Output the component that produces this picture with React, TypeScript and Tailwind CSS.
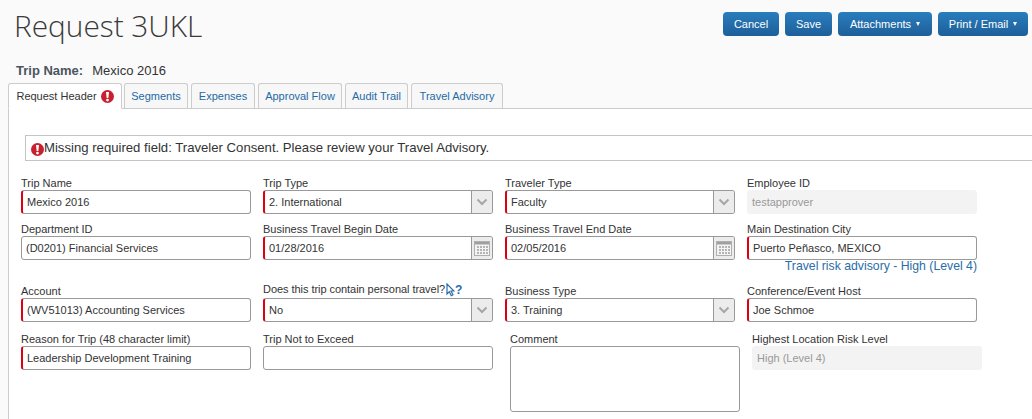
import React from "react";

const sans = "font-['Liberation_Sans',Arial,sans-serif]";

function ErrorIcon({ size = 14, className = "" }: { size?: number; className?: string }) {
  return (
    <svg width={size} height={size} viewBox="0 0 14 14" className={`shrink-0 ${className}`}>
      <circle cx="7" cy="7" r="7" fill="#c8202f" />
      <path d="M5.4 2.2h3.2L7.9 8.6H6.1z" fill="#fff" />
      <circle cx="7" cy="10.8" r="1.5" fill="#fff" />
    </svg>
  );
}

function Chevron() {
  return (
    <svg width="12" height="8" viewBox="0 0 12 8">
      <path d="M1.5 1.5 6 6l4.5-4.5" fill="none" stroke="#a6a6a6" strokeWidth="2" />
    </svg>
  );
}

function Calendar() {
  return (
    <svg width="16" height="15" viewBox="0 0 16 15">
      <rect x="0.5" y="0.5" width="15" height="14" fill="#f4f4f4" stroke="#b0b0b0" />
      <rect x="1" y="1" width="14" height="2.5" fill="#a0a0a0" />
      {[5, 8, 11].map((y) =>
        [3, 6, 9, 12].map((x) => <rect key={`${x}-${y}`} x={x} y={y} width="2" height="2" fill="#b4b4b4" />)
      )}
    </svg>
  );
}

function Label({ children, className = "" }: { children: React.ReactNode; className?: string }) {
  return <div className={`h-[14px] text-[11px] leading-[15px] text-[#333] whitespace-nowrap ${className}`}>{children}</div>;
}

function Field({
  label,
  value,
  required,
  kind,
  disabled,
  className = "w-[230px]",
}: {
  label: React.ReactNode;
  value?: string;
  required?: boolean;
  kind?: "select" | "date";
  disabled?: boolean;
  className?: string;
}) {
  return (
    <div className={className}>
      <Label>{label}</Label>
      <div
        className={`flex h-[24px] items-stretch rounded-[3px] border overflow-hidden ${
          disabled ? "border-[#f3f3f3] bg-[#f3f3f3]" : "border-[#999] bg-white"
        } ${required ? "border-l-2 border-l-[#dd0012]" : ""}`}
      >
        <div className={`flex-1 flex items-center pl-[4px] text-[11px] whitespace-nowrap ${disabled ? "text-[#999]" : "text-[#333]"}`}>
          {value}
        </div>
        {kind && (
          <div className="w-[21px] flex items-center justify-center border-l border-[#999] bg-[#ececec]">
            {kind === "select" ? <Chevron /> : <Calendar />}
          </div>
        )}
      </div>
    </div>
  );
}

function Button({ children, caret, width }: { children: string; caret?: boolean; width: string }) {
  return (
    <div
      className={`flex h-[24px] items-center justify-center gap-[5px] rounded-[4px] bg-gradient-to-b from-[#2a7dbd] to-[#1d5f99] text-[11px] text-white ${width}`}
    >
      {children}
      {caret && <span className="inline-block h-0 w-0 border-x-[2.5px] border-t-[4px] border-x-transparent border-t-white" />}
    </div>
  );
}

function Tab({ children, active, width }: { children: React.ReactNode; active?: boolean; width: string }) {
  return (
    <div
      className={`flex items-center justify-center gap-[4px] rounded-t-[3px] border border-[#ccc] text-[11px] ${width} ${
        active
          ? "h-[26px] -mb-px border-b-white bg-white text-[#333]"
          : "h-[25px] border-b-0 bg-[#f7f7f7] text-[#1f6aa5]"
      }`}
    >
      {children}
    </div>
  );
}

export default function App() {
  return (
    <div className={`${sans} w-[1032px] h-[419px] overflow-hidden bg-[#fafafa] text-[#333]`}>
      <div className="flex h-[62px] items-start justify-between pr-[4px]">
        <h1 className="pl-[14px] pt-[4px] font-['Open_Sans',sans-serif] text-[29.8px] font-light leading-[44px] text-[#3a3a3a]">
          Request 3UKL
        </h1>
        <div className="flex gap-[6px] pt-[12px]">
          <Button width="w-[56px]">Cancel</Button>
          <Button width="w-[47px]">Save</Button>
          <Button caret width="w-[94px]">Attachments</Button>
          <Button caret width="w-[90px]">Print / Email</Button>
        </div>
      </div>

      <div className="h-[21px] pl-[16px] pt-[1px] text-[13px] leading-[16px]">
        <span className="font-bold text-[#4a5560]">Trip Name:</span>
        <span className="ml-[9px]">Mexico 2016</span>
      </div>

      <div className="flex gap-[3px] pl-[8px] items-end">
        <Tab active width="w-[114px] mr-[-1px]">
          Request Header <ErrorIcon size={13} />
        </Tab>
        <Tab width="w-[64px]">Segments</Tab>
        <Tab width="w-[64px]">Expenses</Tab>
        <Tab width="w-[84px]">Approval Flow</Tab>
        <Tab width="w-[63px]">Audit Trail</Tab>
        <Tab width="w-[92px]">Travel Advisory</Tab>
      </div>

      <div className="ml-[8px] h-[311px] border-l border-t border-[#ccc] bg-white pl-[12px]">
        <div className="pt-[26px] pl-[4px]">
          <div className="flex h-[26px] w-[1040px] items-center border border-[#c4c4c4] pl-[5px] text-[13.15px]">
            <ErrorIcon size={13} className="mt-[2px]" />
            <span>Missing required field: Traveler Consent. Please review your Travel Advisory.</span>
          </div>
        </div>

        <div className="mt-[15px] flex gap-[12px]">
          <Field label="Trip Name" value="Mexico 2016" required />
          <Field label="Trip Type" value="2. International" required kind="select" />
          <Field label="Traveler Type" value="Faculty" required kind="select" />
          <Field label="Employee ID" value="testapprover" disabled />
        </div>

        <div className="mt-[8px] flex gap-[12px]">
          <Field label="Department ID" value="(D0201) Financial Services" />
          <Field label="Business Travel Begin Date" value="01/28/2016" required kind="date" />
          <Field label="Business Travel End Date" value="02/05/2016" required kind="date" />
          <Field label="Main Destination City" value="Puerto Peñasco, MEXICO" required />
        </div>

        <div className="flex h-[24px] w-[956px] justify-end">
          <span className="text-[12.25px] leading-[13px] text-[#2a6da8]">Travel risk advisory - High (Level 4)</span>
        </div>

        <div className="flex gap-[12px]">
          <Field label="Account" value="(WV51013) Accounting Services" required />
          <Field
            label={
              <span className="relative -top-[2px] flex items-start">
                <span className="tracking-[-0.05px]">Does this trip contain personal travel?</span>
                <svg width="9" height="14" viewBox="0 0 9 14" className="ml-[1px] mt-[1px] shrink-0">
                  <path d="M1 1v10l2.3-2.3 2 4 1.7-.9-2-3.8H8z" fill="#fff" stroke="#2a6da8" strokeWidth="1.2" />
                </svg>
                <span className="text-[12px] font-bold leading-[17px] text-[#2a6da8]">?</span>
              </span>
            }
            value="No"
            required
            kind="select"
          />
          <Field label="Business Type" value="3. Training" required kind="select" />
          <Field label="Conference/Event Host" value="Joe Schmoe" required />
        </div>

        <div className="mt-[10px] flex gap-[12px]">
          <Field label="Reason for Trip (48 character limit)" value="Leadership Development Training" required />
          <Field label="Trip Not to Exceed" value="" />
          <div className="ml-[5px] w-[230px]">
            <Label>Comment</Label>
            <div className="h-[66px] rounded-[3px] border border-[#999] bg-white" />
          </div>
          <Field label="Highest Location Risk Level" value="High (Level 4)" disabled />
        </div>
      </div>
    </div>
  );
}
